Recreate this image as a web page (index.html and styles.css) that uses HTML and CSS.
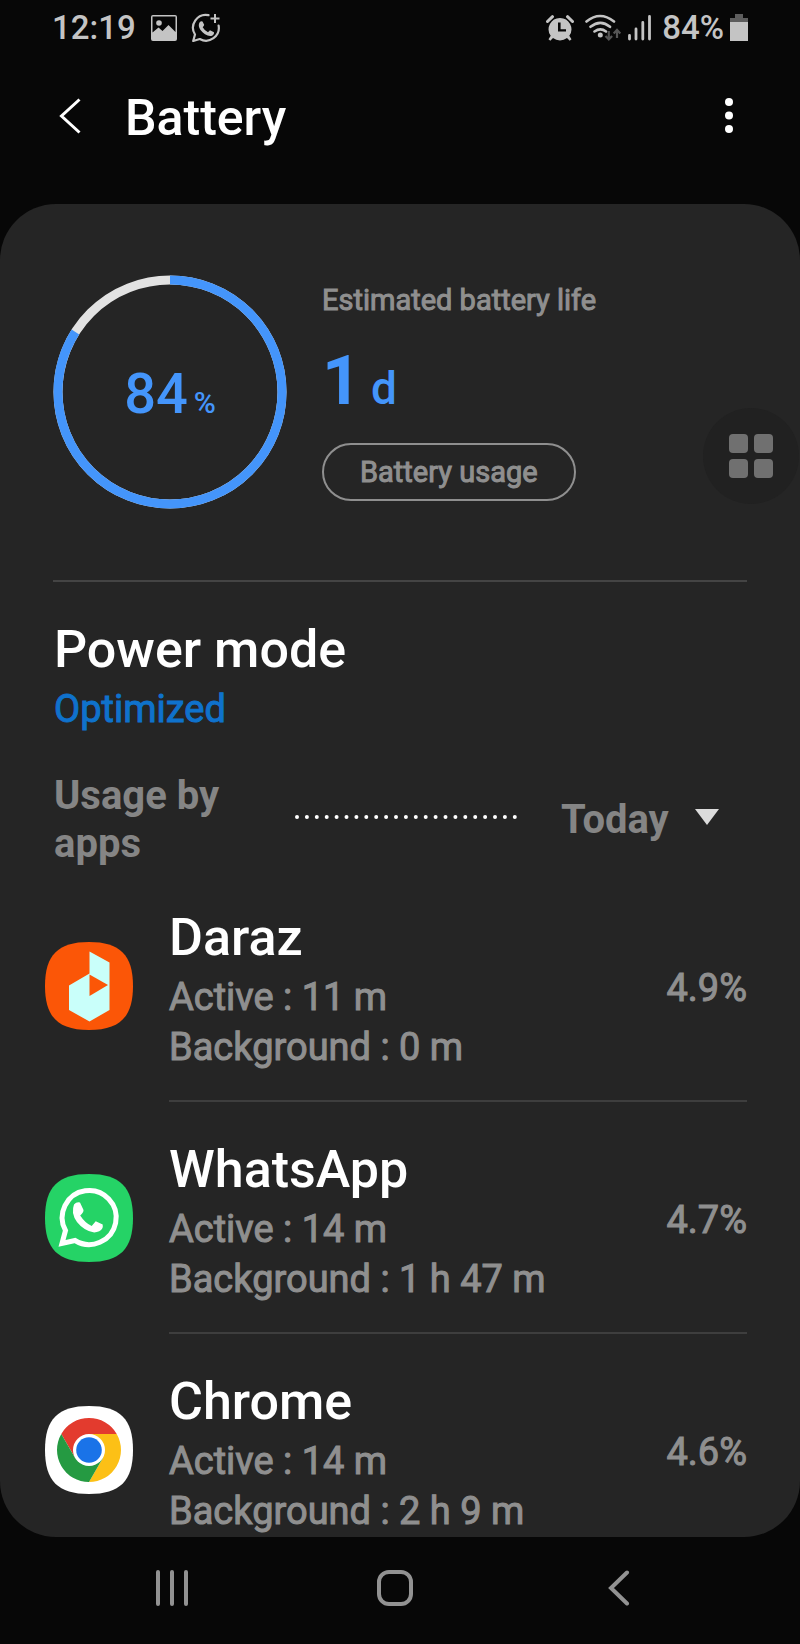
FILE: index.html
```html
<!DOCTYPE html>
<html lang="en">
<head>
<meta charset="utf-8">
<meta name="viewport" content="width=device-width, initial-scale=1">
<title>Battery</title>
<link rel="stylesheet" href="styles.css">
</head>
<body>
<div class="status">
  <span class="status-text">12:19</span>
  <svg class="icon-image" width="26" height="26" viewBox="0 0 26 26"><path fill-rule="evenodd" d="M2 0h22a2 2 0 0 1 2 2v22a2 2 0 0 1-2 2H2a2 2 0 0 1-2-2V2a2 2 0 0 1 2-2zM1.500 1.500v16l6-5 4 3.500 6-6 7 7v-15.500z"/><circle cx="8" cy="8" r="2.800"/></svg>
  <svg class="icon-chat" width="30" height="30" viewBox="0 0 30 30"><path d="M17.500 2.200A12.800 12.800 0 0 0 4 21.500L2.200 28l6.600-2A12.800 12.800 0 0 0 27.600 12.500" fill="none" stroke="#c4c4c4" stroke-width="2.200" stroke-linejoin="round" stroke-linecap="round"/><path d="M24 1v9M19.500 5.500h9" stroke="#c4c4c4" stroke-width="2"/><path d="M8.500 9.500q1.500-2 3-1l1.700 3.300q0 1-1.500 2.400 2.100 3.700 5.300 5l2-2 4 2q.5 1.800-1.500 3.200-3 1.700-7.500-1.200-5.500-3.700-6.200-8.200-.1-2.500.7-3.500z"/></svg>
  <span class="spacer"></span>
  <svg class="icon-alarm" width="28" height="27" viewBox="0 0 28 27"><path fill-rule="evenodd" d="M14 3a11.300 11.300 0 0 1 9.300 17.800l2.200 3.400-1.800 1.500-2.700-2.600a11.300 11.300 0 0 1-14 0l-2.700 2.600-1.800-1.500 2.200-3.400A11.300 11.300 0 0 1 14 3zM12 7.500v9h8v-2.200h-5.400V7.500z"/><path d="M1.500 6.500l5-4.800M26.500 6.500l-5-4.800" stroke="#c4c4c4" stroke-width="3" stroke-linecap="round"/></svg>
  <svg class="icon-wifi" width="38" height="28" viewBox="0 0 38 28"><g fill="none" stroke="#c4c4c4" stroke-width="2.600" stroke-linecap="round"><path d="M2.500 7.500Q16 -3.500 30 7.500M6.500 12.800q10-8 19.500 0M10.500 17.500q6-4.300 11.500 0"/></g><circle cx="16.300" cy="21" r="2.500"/><g fill="none" stroke="#555" stroke-width="2.200"><path d="M24.800 17v8M21.500 22l3.300 3.500 3.300-3.500M33 24v-8M29.700 19.500l3.300-3.700 3.300 3.700"/></g></svg>
  <svg class="icon-signal" width="25" height="26" viewBox="0 0 25 26"><path d="M1.500 20.500V24M8 14v10M14.800 7.500V24M21.500 1.500V24" stroke="#c4c4c4" stroke-width="2.800" stroke-linecap="round"/></svg>
  <span class="status-text status-level">84%</span>
  <svg width="18" height="28" viewBox="0 0 18 28"><path fill="#5d5d5d" d="M5 0h8v4h5v5H0V4h5z"/><path d="M0 8h18v19H0z"/></svg>
</div>

<header class="bar">
  <button class="icon-button back" aria-label="Back"><svg width="22" height="36" viewBox="0 0 22 36"><path d="M20.500 1.500L2.500 18l18 16.500" fill="none" stroke="#fff" stroke-width="3"/></svg></button>
  <h1 class="title">Battery</h1>
  <button class="icon-button" aria-label="More options"><svg width="10" height="36" viewBox="0 0 10 36"><g fill="#fff"><circle cx="5" cy="4" r="4"/><circle cx="5" cy="17.500" r="4"/><circle cx="5" cy="31" r="4"/></g></svg></button>
</header>

<main class="card">
  <section class="summary">
    <div class="gauge">
      <svg class="ring" viewBox="0 0 234 234"><g fill="none" stroke-width="9" transform="rotate(-90 117 117)"><circle cx="117" cy="117" r="112" stroke="#e2e2e2"/><circle cx="117" cy="117" r="112" stroke="#4495fb" pathLength="100" stroke-dasharray="84 16"/></g></svg>
      <div class="gauge-value"><span>84</span><span class="gauge-unit">%</span></div>
    </div>
    <div class="estimate">
      <p class="estimate-label">Estimated battery life</p>
      <p class="estimate-value"><span>1</span><span class="estimate-unit">d</span></p>
      <button class="pill">Battery usage</button>
    </div>
    <button class="float" aria-label="Open shortcuts"><svg width="46" height="46" viewBox="0 0 46 46"><g fill="#707070"><rect width="19" height="19" x="1" y="1" rx="4"/><rect width="19" height="19" x="26" y="1" rx="4"/><rect width="19" height="19" x="1" y="26" rx="4"/><rect width="19" height="19" x="26" y="26" rx="4"/></g></svg></button>
  </section>

  <section class="mode">
    <h2 class="heading">Power mode</h2>
    <p class="mode-value">Optimized</p>
  </section>

  <section class="usage">
    <label class="usage-label" for="period">Usage by apps</label>
    <svg class="dots" height="6"><line x1="2" y1="3" x2="100%" y2="3" stroke="#fff" stroke-width="4" stroke-linecap="round" stroke-dasharray="0 9.900"/></svg>
    <div class="period">
      <select id="period" class="select"><option>Today</option></select>
      <svg class="caret" width="24" height="16" viewBox="0 0 24 16"><path fill="#dcdcdc" d="M0 0h24L12 16z"/></svg>
    </div>
  </section>

  <ul class="apps">
    <li class="app">
      <svg class="app-icon" viewBox="0 0 88 88"><path fill="#fb5607" d="M44 0C75 0 88 13 88 44S75 88 44 88 0 75 0 44 13 0 44 0z"/><path fill="#c9fffa" d="M44.500 9.500l20 11V68l-20 11.500L24 68V43.500l20.500-12z"/><path fill="#fb5607" d="M44.500 32.500v21.500L63 43z"/></svg>
      <div class="app-body">
        <div class="app-text"><h3 class="heading">Daraz</h3><p>Active : 11 m</p><p>Background : 0 m</p></div>
        <span class="share">4.9%</span>
      </div>
    </li>
    <li class="app">
      <svg class="app-icon" viewBox="0 0 88 88"><path fill="#25d366" d="M44 0C75 0 88 13 88 44S75 88 44 88 0 75 0 44 13 0 44 0z"/><g transform="translate(-2 -1)"><path d="M22.500 57.500A27 27 0 1 1 32 67.500l-13 3z" fill="none" stroke="#fff" stroke-width="5"/><path fill="#fff" d="M31 31.500q2.500-3 6-2l3.500 7.500q.3 2.200-3.300 5.500 4.800 7.500 11.500 10.500l4-4.800 7 3.400q.8 4.500-3.500 6.700-6.500 3-14.500-2.200-10-6.600-11.700-16-.3-5.600 1-8.600z"/></g></svg>
      <div class="app-body">
        <div class="app-text"><h3 class="heading">WhatsApp</h3><p>Active : 14 m</p><p>Background : 1 h 47 m</p></div>
        <span class="share">4.7%</span>
      </div>
    </li>
    <li class="app">
      <svg class="app-icon" viewBox="0 0 88 88"><path fill="#fff" d="M44 0C75 0 88 13 88 44S75 88 44 88 0 75 0 44 13 0 44 0z"/><path fill="#e33b2e" d="M16.290 28A32 32 0 0 1 71.710 28H44L30.140 52z"/><path fill="#fcc016" d="M71.710 28A32 32 0 0 1 44 76L57.860 52 44 28z"/><path fill="#259a42" d="M44 76A32 32 0 0 1 16.290 28L30.140 52 57.860 52z"/><circle cx="44" cy="44" r="16" fill="#fff"/><circle cx="44" cy="44" r="12.800" fill="#1a73e8"/></svg>
      <div class="app-body">
        <div class="app-text"><h3 class="heading">Chrome</h3><p>Active : 14 m</p><p>Background : 2 h 9 m</p></div>
        <span class="share">4.6%</span>
      </div>
    </li>
  </ul>
</main>

<nav class="nav">
  <button class="icon-button" aria-label="Recent apps"><svg width="36" height="36" viewBox="0 0 36 36"><path d="M4 2v32M18 2v32M32 2v32" stroke="#929292" stroke-width="4" stroke-linecap="round"/></svg></button>
  <button class="icon-button" aria-label="Home"><svg width="36" height="36" viewBox="0 0 36 36"><rect x="2" y="2" width="32" height="32" rx="10" fill="none" stroke="#929292" stroke-width="4"/></svg></button>
  <button class="icon-button" aria-label="Back"><svg width="36" height="36" viewBox="0 0 36 36"><path d="M26 2.500L10 18l16 15.500" fill="none" stroke="#929292" stroke-width="4" stroke-linecap="round"/></svg></button>
</nav>
</body>
</html>
```
FILE: styles.css
```css
* { box-sizing: border-box; margin: 0; padding: 0; }

body {
  background: #070707;
  color: #fff;
  font-family: Roboto, "Liberation Sans", sans-serif;
  font-weight: 400;
}

button, select {
  font: inherit;
  color: inherit;
  background: none;
  border: 0;
}

svg { display: block; flex: none; }

.status {
  display: flex;
  align-items: center;
  height: 56px;
  padding: 0 52px;
  fill: #c4c4c4;
  color: #c4c4c4;
}
.status-text { font-size: 33px; line-height: 56px; font-weight: 500; }
.status-level { margin: 0 6px 0 9px; }
.icon-image { margin-left: 15px; }
.icon-chat { margin-left: 14px; }
.icon-alarm { margin-right: 10px; }
.icon-wifi { margin-right: 6px; }
.spacer { flex: 1; }

.bar {
  display: flex;
  align-items: center;
  height: 120px;
  margin-bottom: 28px;
  padding: 0 62px 0 55px;
}
.icon-button { display: flex; align-items: center; justify-content: center; padding: 4px; }
.back { margin-right: 40px; }
.title { flex: 1; padding-top: 4px; font-size: 50px; line-height: 64px; font-weight: 500; }

.card {
  background: #252525;
  border-radius: 56px;
  padding-bottom: 1px;
  overflow: hidden;
}

.summary {
  position: relative;
  display: flex;
  gap: 35px;
  margin: 0 53px;
  padding: 71px 0;
  border-bottom: 2px solid #444;
}
.gauge { display: grid; place-items: center; width: 234px; height: 234px; color: #4495fb; }
.ring, .gauge-value { grid-area: 1 / 1; }
.ring { width: 100%; }
.gauge-value { display: flex; align-items: baseline; gap: 6px; padding-top: 13px; font-size: 56px; line-height: 64px; font-weight: 500; }
.gauge-unit { font-size: 30px; }
.estimate { padding-top: 7px; }
.estimate-label {
  font-size: 29px;
  line-height: 36px;
  color: #8f8f8f;
  -webkit-text-stroke: 1px #8f8f8f;
}
.estimate-value {
  display: flex;
  align-items: baseline;
  gap: 10px;
  font-size: 68px;
  line-height: 80px;
  font-weight: 700;
  color: #4495fb;
  margin: 23px 0 15px;
}
.estimate-unit { font-size: 46px; font-weight: 500; }
.pill {
  padding: 0 36px;
  border: 2px solid #8f8f8f;
  border-radius: 30px;
  font-size: 29px;
  line-height: 54px;
  color: #8f8f8f;
  -webkit-text-stroke: 1px #8f8f8f;
}
.float {
  position: absolute;
  top: 204px;
  right: -52px;
  width: 96px;
  height: 96px;
  border-radius: 50%;
  background: #212121;
  display: grid;
  place-items: center;
}

.heading { font-size: 52px; line-height: 66px; font-weight: 500; }
.mode { padding: 35px 54px 0; }
.mode-value {
  font-size: 38px;
  line-height: 52px;
  color: #0f72cc;
  -webkit-text-stroke: 1px #0f72cc;
}

.usage {
  display: flex;
  align-items: center;
  padding: 37px 81px 0 54px;
  margin-bottom: 2px;
  font-size: 40px;
  line-height: 48px;
  font-weight: 700;
  color: #858585;
}
.usage-label { width: 241px; }
.dots { flex: 1; min-width: 0; margin-bottom: 6px; overflow: visible; }
.period { display: flex; align-items: center; gap: 26px; margin-left: 44px; }
.select { appearance: none; }
.caret { margin-bottom: 6px; }

.apps { list-style: none; }
.app {
  display: flex;
  align-items: flex-start;
  margin-right: 53px;
  padding-left: 45px;
}
.app-icon { width: 88px; height: 88px; margin: 72px 36px 0 0; }
.app-body {
  flex: 1;
  display: flex;
  padding: 35px 0 28px;
  border-bottom: 2px solid #3e3e3e;
  font-size: 38px;
  line-height: 50px;
  color: #8f8f8f;
  -webkit-text-stroke: 1px #8f8f8f;
}
.app:last-child .app-body { border: 0; padding-bottom: 0; }
.app-text { flex: 1; }
.app-text .heading { margin-bottom: 1px; color: #fff; -webkit-text-stroke: 0; }
.share { padding-top: 58px; }

.nav {
  display: flex;
  justify-content: space-around;
  align-items: center;
  height: 102px;
  padding: 0 69px 0 60px;
}
```
